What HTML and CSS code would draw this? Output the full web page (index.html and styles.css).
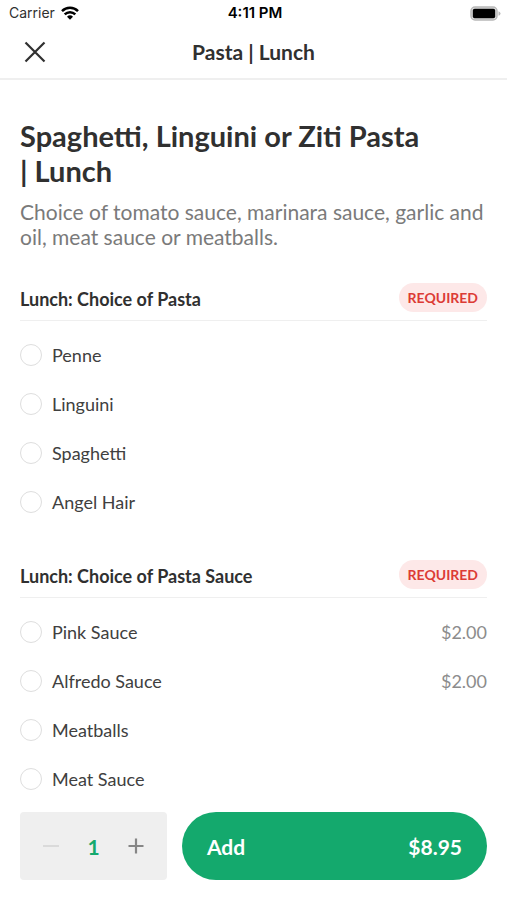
FILE: index.html
```html
<!DOCTYPE html>
<html lang="en">
<head>
<meta charset="utf-8">
<meta name="viewport" content="width=device-width, initial-scale=1">
<title>Pasta | Lunch</title>
<link rel="stylesheet" href="styles.css">
</head>
<body>
<div class="screen">
  <header class="top">
    <div class="status">
      <span class="carrier">Carrier
        <svg width="18" height="14" viewBox="0 0 18 14" aria-hidden="true"><path d="M1 5.1a11.4 11.4 0 0 1 16 0M3.7 8.3a7.6 7.6 0 0 1 10.6 0" fill="none" stroke="#000" stroke-width="2.5"/><path d="M9 13.7 6 10.8a4.3 4.3 0 0 1 6 0z"/></svg>
      </span>
      <span class="time">4:11 PM</span>
      <svg class="battery" width="31" height="15" viewBox="0 0 31 15" aria-hidden="true"><rect x="1" y="1" width="26" height="13" rx="4" fill="#ddd" stroke="#b8b8b8" stroke-width="1.5"/><rect x="2.8" y="2.8" width="22.4" height="9.4" rx="1.8"/><path d="M28.5 5.2v4.6q2-.7 2-2.3t-2-2.3z" fill="#b8b8b8"/></svg>
    </div>
    <div class="nav">
      <button class="close" type="button" aria-label="Close"><svg width="22" height="22" viewBox="0 0 22 22"><path d="M1.5 1.5l19 19M20.5 1.5l-19 19" stroke="#303030" stroke-width="2.2"/></svg></button>
      <span class="nav-title">Pasta | Lunch</span>
    </div>
  </header>
  <main class="content">
    <h1>Spaghetti, Linguini or Ziti Pasta | Lunch</h1>
    <p class="description">Choice of tomato sauce, marinara sauce, garlic and oil, meat sauce or meatballs.</p>
    <section class="group">
      <div class="group-head"><h2>Lunch: Choice of Pasta</h2><span class="badge">REQUIRED</span></div>
      <label class="option"><input type="radio" name="pasta"><span>Penne</span></label>
      <label class="option"><input type="radio" name="pasta"><span>Linguini</span></label>
      <label class="option"><input type="radio" name="pasta"><span>Spaghetti</span></label>
      <label class="option"><input type="radio" name="pasta"><span>Angel Hair</span></label>
    </section>
    <section class="group">
      <div class="group-head"><h2>Lunch: Choice of Pasta Sauce</h2><span class="badge">REQUIRED</span></div>
      <label class="option"><input type="radio" name="sauce"><span>Pink Sauce</span><span class="price">$2.00</span></label>
      <label class="option"><input type="radio" name="sauce"><span>Alfredo Sauce</span><span class="price">$2.00</span></label>
      <label class="option"><input type="radio" name="sauce"><span>Meatballs</span></label>
      <label class="option"><input type="radio" name="sauce"><span>Meat Sauce</span></label>
    </section>
  </main>
  <footer class="bar">
    <div class="stepper">
      <button type="button" aria-label="Decrease quantity"><svg width="16" height="16" viewBox="0 0 16 16"><path d="M0 8h16" stroke="#dadada" stroke-width="2"/></svg></button>
      <span class="count">1</span>
      <button type="button" aria-label="Increase quantity"><svg width="16" height="16" viewBox="0 0 16 16"><path d="M.5 8h15M8 .5v15" stroke="#868686" stroke-width="2.2"/></svg></button>
    </div>
    <button class="add" type="button"><span>Add</span><span>$8.95</span></button>
  </footer>
</div>
</body>
</html>
```
FILE: styles.css
```css
* { box-sizing: border-box; }
body {
  margin: 0;
  background: #fff;
  color: #303030;
  font-family: Lato, sans-serif;
}
h1, h2, p { margin: 0; }
button {
  padding: 0;
  border: 0;
  background: none;
  font: inherit;
  cursor: pointer;
}
svg { display: block; }
.screen {
  display: flex;
  flex-direction: column;
  height: 100vh;
}
.top { border-bottom: 2px solid #efefef; }
.status {
  display: grid;
  grid-template-columns: 1fr auto 1fr;
  align-items: center;
  height: 26px;
  padding: 0 6px 0 9px;
  color: #000;
  font: 14px/26px Inter, sans-serif;
}
.carrier {
  display: flex;
  align-items: center;
  gap: 6px;
  color: #303030;
}
.time { font-size: 15px; font-weight: 600; }
.battery { justify-self: end; }
.nav {
  display: grid;
  grid-template-columns: 1fr auto 1fr;
  align-items: center;
  height: 52px;
  padding: 0 24px;
}
.close { justify-self: start; }
.nav-title { font-size: 21px; font-weight: 700; line-height: 24px; }
.content {
  flex: 1;
  min-height: 0;
  overflow: hidden;
  padding: 38px 20px 0;
}
h1 {
  padding-right: 60px;
  font-size: 29px;
  line-height: 35px;
}
.description {
  margin-top: 11px;
  color: #7a7a7a;
  font-size: 21px;
  line-height: 25px;
}
.group { margin-top: 33px; }
.group-head {
  display: flex;
  align-items: center;
  justify-content: space-between;
  height: 39px;
  padding-bottom: 8px;
  margin-bottom: 9px;
  border-bottom: 1px solid #efefef;
}
h2 {
  padding-top: 3px;
  font-size: 18px;
  line-height: 24px;
}
.badge {
  padding: 0 9px;
  border-radius: 15px;
  background: #fde8e8;
  color: #dc3b35;
  font-size: 14px;
  font-weight: 700;
  line-height: 29px;
}
.option {
  display: flex;
  align-items: center;
  gap: 10px;
  height: 49px;
  color: #404040;
  font-size: 18px;
}
.option input {
  appearance: none;
  width: 22px;
  height: 22px;
  margin: 0;
  border: 1px solid #dedede;
  border-radius: 50%;
}
.option input:checked { border: 6px solid #14a96d; }
.price { margin-left: auto; color: #8c8c8c; }
.bar {
  display: flex;
  gap: 15px;
  padding: 12px 20px 20px;
}
.stepper {
  display: flex;
  align-items: center;
  justify-content: space-between;
  width: 147px;
  height: 68px;
  padding: 0 23px;
  border-radius: 4px;
  background: #efefef;
}
.count { color: #14a96d; font-size: 21px; font-weight: 700; }
.add {
  display: flex;
  flex: 1;
  align-items: center;
  justify-content: space-between;
  padding: 0 25px;
  border-radius: 34px;
  background: #14a96d;
  color: #fff;
  font-size: 21px;
  font-weight: 700;
}
```
